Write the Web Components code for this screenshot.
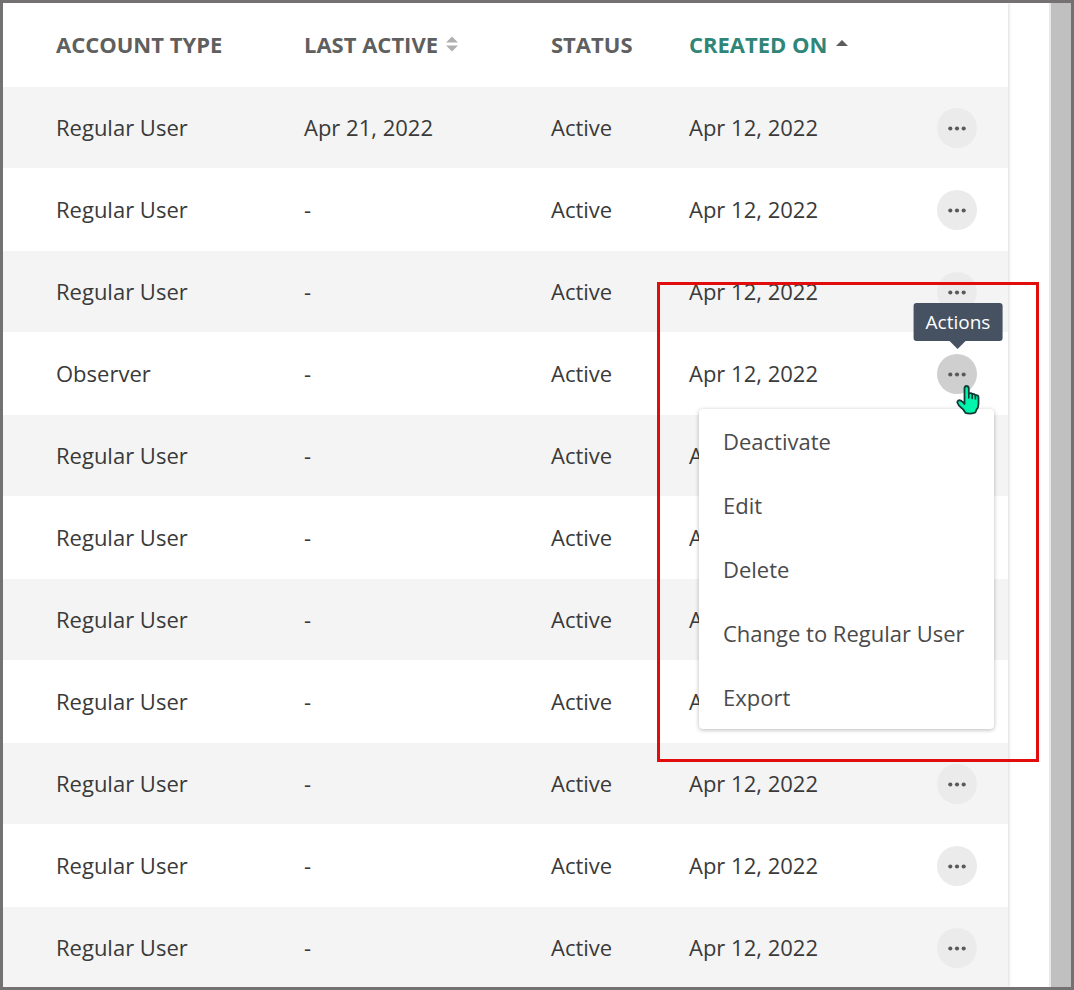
<!DOCTYPE html>
<html lang="en">
<head>
<meta charset="utf-8">
<title>Users</title>
<style>
  body { margin: 0; font-family: "Open Sans", "Noto Sans", sans-serif; font-size: 22px; color: #3a3a3a; background: #fff; }
</style>
</head>
<body>
<users-page></users-page>
<script>
const define = (name, html, setup) => {
  const template = document.createElement('template');
  template.innerHTML = html;
  customElements.define(name, class extends HTMLElement {
    constructor() {
      super();
      this.attachShadow({ mode: 'open' }).append(template.content.cloneNode(true));
    }
    connectedCallback() { if (setup) setup(this, this.shadowRoot); }
  });
};

define('sort-icon', `
  <style>
    :host { display: inline-flex; width: 14px; height: 16px; color: #b0b0b0; }
    :host([direction="asc"]) { color: #5c5c5c; }
    :host([direction="asc"]) .both { display: none; }
    :host(:not([direction])) .asc { display: none; }
  </style>
  <svg width="14" height="16" viewBox="0 0 14 16" fill="currentColor" aria-hidden="true">
    <path class="both" d="M1 6.500 7 .5 13 6.500zM1 9.500 7 15.500 13 9.500z"/>
    <path class="asc" d="M1 10 7 4 13 10z"/>
  </svg>`);

define('action-tooltip', `
  <style>
    :host { display: block; box-sizing: border-box; height: 38px; padding: 0 12px; border-radius: 3px;
      background: #465262; color: #fff; font-size: 19px; line-height: 38px; white-space: nowrap; }
    :host::after { content: ""; position: absolute; top: 100%; left: 50%; margin-left: -8px;
      border: 8px solid transparent; border-top-color: #465262; border-bottom: 0; }
  </style>
  <slot></slot>`);

define('action-menu', `
  <style>
    :host { display: block; box-sizing: border-box; width: 295px; background: #fff; border-radius: 4px;
      box-shadow: 0 1px 4px rgba(0,0,0,.28); }
    ::slotted(button) { display: block; width: 100%; height: 64px; margin: 0; padding: 0 24px; border: 0;
      background: none; font: inherit; color: #4a4a4a; text-align: left; white-space: nowrap; cursor: pointer; }
  </style>
  <slot></slot>`, el => el.setAttribute('role', 'menu'));

define('row-actions', `
  <style>
    :host { display: block; position: relative; width: 40px; height: 40px; }
    .dots { display: flex; align-items: center; justify-content: center; width: 40px; height: 40px; padding: 0;
      border: 0; border-radius: 50%; background: #ebebeb; color: #5a5a5a; cursor: pointer; }
    :host([open]) .dots { background: #cfcfcf; }
    .layer { display: none; }
    :host([open]) .layer { display: block; position: absolute; z-index: 2; }
    .tip { bottom: calc(100% + 13px); left: 21px; transform: translateX(-50%); }
    .menu { top: calc(100% + 15px); right: -17px; }
    .pointer { top: 30px; left: 19px; }
    .pointer svg { display: block; }
  </style>
  <button class="dots" type="button" aria-label="Actions">
    <svg width="20" height="6" viewBox="0 0 20 6" fill="currentColor" aria-hidden="true">
      <circle cx="3.300" cy="3.500" r="2.100"/><circle cx="10" cy="3.500" r="2.100"/><circle cx="16.700" cy="3.500" r="2.100"/>
    </svg>
  </button>
  <action-tooltip class="layer tip">Actions</action-tooltip>
  <action-menu class="layer menu">
    <button type="button" role="menuitem">Deactivate</button>
    <button type="button" role="menuitem">Edit</button>
    <button type="button" role="menuitem">Delete</button>
    <button type="button" role="menuitem">Change to Regular User</button>
    <button type="button" role="menuitem">Export</button>
  </action-menu>
  <div class="layer pointer">
    <svg width="24" height="31" viewBox="0 0 24 31" aria-hidden="true">
      <path d="M8.500 20V4.500Q8.500 2 10.500 2T12.800 4.500V9.500Q15.500 8.300 16.200 10.300 18.600 9.300 19.400 11.300 22.500 10.700 22.500 13.500V20Q22.500 23.500 20.300 26L19.500 28.300Q14 30.500 9.500 28.800 8 25.500 5 23.500 2.500 21.500 1.300 18.500 1.500 16 4 16.300 6 16.500 8.500 20Z" fill="#00f5ac" stroke="#123b35" stroke-width="1.800" stroke-linejoin="round"/>
      <path d="M12.800 9.500V14M16.200 10.300V14.500M19.400 11.300V15" fill="none" stroke="#123b35" stroke-width="1.600" stroke-linecap="round"/>
    </svg>
  </div>`);

define('users-table', `
  <style>
    :host { display: block; }
    table { width: 100%; border-collapse: collapse; table-layout: fixed; }
    .type, .created { width: 248px; }
    .seen { width: 247px; }
    .status { width: 138px; }
    th, td { box-sizing: border-box; padding: 0 0 2px 53px; text-align: left; white-space: nowrap; vertical-align: middle; }
    th { height: 84px; font-weight: 700; color: #5f5f5f; }
    td { height: 83px; }
    td:last-child { padding-bottom: 0; }
    tbody tr:nth-child(odd) { background: #f4f4f4; }
    tbody tr:nth-child(odd) td { height: 81px; }
    th button { display: inline-flex; align-items: center; gap: 7px; padding: 0; border: 0; background: none;
      font: inherit; color: inherit; cursor: pointer; }
    th[aria-sort] { color: #2f8577; }
  </style>
  <table>
    <colgroup><col class="type"><col class="seen"><col class="status"><col class="created"><col></colgroup>
    <thead><tr>
      <th scope="col">ACCOUNT TYPE</th>
      <th scope="col"><button type="button">LAST ACTIVE<sort-icon></sort-icon></button></th>
      <th scope="col">STATUS</th>
      <th scope="col" aria-sort="ascending"><button type="button">CREATED ON<sort-icon direction="asc"></sort-icon></button></th>
      <td></td>
    </tr></thead>
    <tbody></tbody>
  </table>`, (el, root) => {
  const body = root.querySelector('tbody');
  for (let i = 0; i < 11; i++) {
    const row = body.insertRow();
    const texts = [i === 3 ? 'Observer' : 'Regular User', i === 0 ? 'Apr 21, 2022' : '-', 'Active', 'Apr 12, 2022'];
    for (const text of texts) row.insertCell().textContent = text;
    const actions = document.createElement('row-actions');
    if (i === 3) actions.setAttribute('open', '');
    row.insertCell().append(actions);
  }
});

define('scroll-track', `
  <style>:host { display: block; box-sizing: border-box; width: 22px; border-left: 2px solid #e8e8e8; background: #c0c0c0; }</style>`);

define('highlight-box', `
  <style>:host { display: block; box-sizing: border-box; border: 3px solid #e10c0c; pointer-events: none; }</style>`);

define('users-page', `
  <style>
    :host { display: flex; position: relative; box-sizing: border-box; height: 100vh; overflow: hidden;
      border: 3px solid #737171; }
    users-table { flex: 1; min-width: 0; margin-right: 41px; box-shadow: 1px 0 3px rgba(0,0,0,.15); }
    highlight-box { position: absolute; z-index: 3; top: 279px; right: 32px; width: 382px; height: 480px; }
  </style>
  <users-table></users-table>
  <scroll-track></scroll-track>
  <highlight-box></highlight-box>`);
</script>
</body>
</html>
